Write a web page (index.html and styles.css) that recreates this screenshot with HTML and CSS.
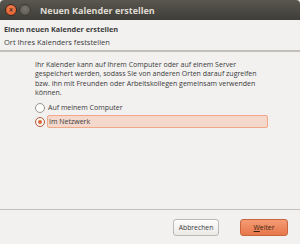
FILE: index.html
```html
<!DOCTYPE html>
<html>
<head>
    <title>Neuen Kalender erstellen</title>
    <meta name='viewport' content='width=device-width, initial-scale=1'>
    <link rel="stylesheet" href="styles.css">
</head>
<body>
    <div class="window">
        <div class="titlebar">
            <span class="wbtn close">&#215;</span>
            <span class="wbtn min"></span>
            <span class="title">Neuen Kalender erstellen</span>
        </div>
        <div class="header">
            <div class="head-title">Einen neuen Kalender erstellen</div>
            <div class="head-sub">Ort Ihres Kalenders feststellen</div>
        </div>
        <div class="main">
            <p class="info">Ihr Kalender kann auf Ihrem Computer oder auf einem Server<br>gespeichert werden, sodass Sie von anderen Orten darauf zugreifen<br>bzw. ihn mit Freunden oder Arbeitskollegen gemeinsam verwenden<br>können.</p>
            <div class="option">
                <span class="radio"></span>
                <span class="label">Auf meinem Computer</span>
            </div>
            <div class="option">
                <span class="radio checked"></span>
                <span class="label focus">Im Netzwerk</span>
            </div>
        </div>
        <div class="footer">
            <button class="btn cancel">Abbrechen</button>
            <button class="btn primary"><u>W</u>eiter</button>
        </div>
    </div>
</body>
</html>
```

FILE: styles.css
```css
html, body {
    margin: 0;
    padding: 0;
}
body {
    background-color: #f2f1f0;
    font-family: "Open Sans", "DejaVu Sans", sans-serif;
    color: #3c3c3c;
    width: 300px;
    height: 244px;
    overflow: hidden;
}
.window {
    display: flex;
    flex-direction: column;
    height: 244px;
}
.titlebar {
    height: 20px;
    display: flex;
    align-items: center;
    padding-left: 5px;
    background: linear-gradient(#5a5650, #3e3d38);
    border-radius: 4px 4px 0 0;
}
.wbtn {
    width: 10px;
    height: 10px;
    border-radius: 50%;
    margin-right: 2px;
    font-size: 8px;
    line-height: 10px;
    text-align: center;
    color: #5a2a14;
    font-weight: bold;
}
.close {
    background: radial-gradient(circle at 50% 40%, #f58a5a, #d9501f);
    border: 1px solid #3a2a22;
}
.min {
    background: radial-gradient(circle at 50% 40%, #7a766e, #55524c);
    border: 1px solid #3a3833;
}
.title {
    margin-left: 7px;
    color: #dfdbd2;
    font-size: 9px;
    font-weight: bold;
}
.header {
    height: 28px;
    padding: 2px 0 0 4px;
    border-bottom: 2px solid #c3c0bb;
    font-size: 7.5px;
}
.head-title {
    font-weight: bold;
    font-size: 7.3px;
    line-height: 13px;
    margin-top: 1px;
}
.head-sub {
    line-height: 13px;
}
.main {
    flex: 1;
    padding: 8px 10px 0 35px;
    font-size: 7px;
    color: #3a3a3a;
}
.info {
    margin: 0 0 4px;
    line-height: 9.3px;
    white-space: nowrap;
}
.option {
    display: flex;
    align-items: center;
    height: 13px;
    margin-bottom: 1px;
}
.radio {
    width: 8px;
    height: 8px;
    border-radius: 50%;
    border: 1px solid #9a968f;
    background: #fbfbfa;
    margin: 0 2px 0 0;
    position: relative;
}
.radio.checked {
    border-color: #b85b34;
    background: #f6f3f1;
}
.radio.checked::after {
    content: "";
    position: absolute;
    left: 2px;
    top: 2px;
    width: 4px;
    height: 4px;
    border-radius: 50%;
    background: #e06a3c;
}
.label {
    padding-left: 1px;
}
.label.focus {
    width: 218px;
    height: 11px;
    line-height: 11px;
    background-color: #f4d8cc;
    border: 1px solid #f0a888;
    border-radius: 2px;
}
.footer {
    height: 34px;
    border-top: 1px solid #c3c0bb;
    display: flex;
    justify-content: flex-end;
    align-items: center;
    padding-right: 12px;
    gap: 21px;
}
.btn {
    height: 17px;
    padding: 0;
    font-family: "Open Sans", "DejaVu Sans", sans-serif;
    font-size: 6.8px;
    color: #3c3c3c;
    background: linear-gradient(#fdfdfc, #ebe9e6);
    border: 1px solid #bcb8b2;
    border-radius: 3px;
    margin-top: 1px;
}
.btn.cancel {
    width: 46px;
}
.btn.primary {
    width: 48px;
    color: #3a2418;
    background: linear-gradient(#f59b74, #e7774b);
    border-color: #c8653e;
}
```
